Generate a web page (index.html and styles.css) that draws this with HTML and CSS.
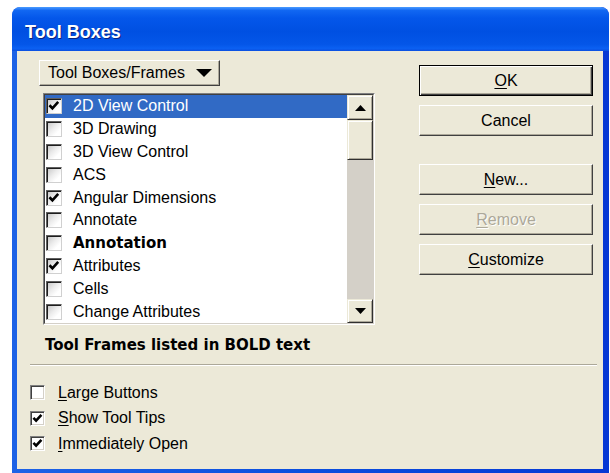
FILE: index.html
```html
<!DOCTYPE html>
<html lang="en">
<head>
<meta charset="utf-8">
<title>Tool Boxes</title>
<link rel="stylesheet" href="styles.css">
</head>
<body>
<div class="window">
  <div class="titlebar"><span class="title">Tool Boxes</span></div>
  <div class="client">
    <div class="top">
      <div class="left">
        <button class="btn dropdown" type="button">
          <span>Tool Boxes/Frames</span>
          <svg class="caret" width="16" height="8" viewBox="0 0 16 8"><path d="M0 0H16L8 8Z" fill="#000"/></svg>
        </button>
        <div class="listbox">
          <div class="frame">
            <ul class="items">
              <li class="item selected"><span class="cb"><svg viewBox="0 0 16 16"><path d="M2.8 7.2L6.2 10.6L12.8 3.4" class="tick"/></svg></span>2D View Control</li>
              <li class="item"><span class="cb"></span>3D Drawing</li>
              <li class="item"><span class="cb"></span>3D View Control</li>
              <li class="item"><span class="cb"></span>ACS</li>
              <li class="item"><span class="cb"><svg viewBox="0 0 16 16"><path d="M2.8 7.2L6.2 10.6L12.8 3.4" class="tick"/></svg></span>Angular Dimensions</li>
              <li class="item"><span class="cb"></span>Annotate</li>
              <li class="item frame-entry"><span class="cb"></span>Annotation</li>
              <li class="item"><span class="cb"><svg viewBox="0 0 16 16"><path d="M2.8 7.2L6.2 10.6L12.8 3.4" class="tick"/></svg></span>Attributes</li>
              <li class="item"><span class="cb"></span>Cells</li>
              <li class="item"><span class="cb"></span>Change Attributes</li>
            </ul>
            <div class="vscroll">
              <div class="sbtn"><svg width="11" height="6" viewBox="0 0 11 6"><path d="M5.5 0L11 6H0Z" fill="#000"/></svg></div>
              <div class="thumb"></div>
              <div class="track"></div>
              <div class="sbtn down"><svg width="11" height="6" viewBox="0 0 11 6"><path d="M0 0H11L5.5 6Z" fill="#000"/></svg></div>
            </div>
          </div>
        </div>
      </div>
      <div class="actions">
        <button class="btn default" type="button"><u>O</u>K</button>
        <button class="btn" type="button">Cancel</button>
        <button class="btn spaced" type="button"><u>N</u>ew...</button>
        <button class="btn disabled" type="button"><u>R</u>emove</button>
        <button class="btn" type="button"><u>C</u>ustomize</button>
      </div>
    </div>
    <p class="note">Tool Frames listed in BOLD text</p>
    <hr class="sep">
    <div class="options">
      <div class="opt"><span class="box"></span><span><u>L</u>arge Buttons</span></div>
      <div class="opt"><span class="box"><svg viewBox="0 0 15 15"><path d="M2.8 6.8L5.9 9.9L12 3.4" class="tick"/></svg></span><span><u>S</u>how Tool Tips</span></div>
      <div class="opt"><span class="box"><svg viewBox="0 0 15 15"><path d="M2.8 6.8L5.9 9.9L12 3.4" class="tick"/></svg></span><span><u>I</u>mmediately Open</span></div>
    </div>
  </div>
</div>
</body>
</html>
```

FILE: styles.css
```css
* { box-sizing: border-box; }

html, body {
  margin: 0;
  background: #fff;
}

body {
  font-family: "Liberation Sans", Arial, sans-serif;
  font-size: 16px;
  color: #000;
}

u {
  text-decoration: underline;
  text-underline-offset: 2px;
}

/* window frame */
.window {
  margin: 7px 0 0 12px;
  width: 597px;
  height: 466px;
  display: flex;
  flex-direction: column;
  background: linear-gradient(to right, #1d62e6 0%, #0a4ede 50%, #0638d4 100%);
  border-radius: 8px 8px 0 0;
  overflow: hidden;
}

.titlebar {
  flex: none;
  height: 44px;
  display: flex;
  align-items: center;
  padding: 6px 0 0 13px;
  background: linear-gradient(to bottom,
    #4a9bff 0%, #1167f2 8%, #0457ea 25%, #0050e2 55%, #0456e8 85%, #0b60f2 94%, #0a4fe0 100%);
  border-radius: 8px 8px 0 0;
}

.title {
  color: #fff;
  font-weight: bold;
  font-size: 18px;
  text-shadow: 1px 1px 0 #0a237f;
}

.client {
  flex: 1;
  margin: 0 6px 4px 5px;
  background: #ece9d8;
}

/* upper area: list on the left, command buttons on the right */
.top {
  display: flex;
  padding-top: 9px;
}

.left {
  padding-left: 22px;
}

.btn {
  font: inherit;
  color: #000;
  background: #ece9d8;
  border: 1px solid;
  border-color: #fff #404040 #404040 #fff;
  box-shadow: inset -1px -1px 0 #aca899;
  padding: 0;
  margin: 0;
}

.dropdown {
  width: 181px;
  height: 26px;
  display: flex;
  align-items: center;
  justify-content: space-between;
  padding: 0 7px 0 8px;
}

.caret { display: block; }

.listbox {
  margin: 7px 0 0 4px;
  width: 332px;
  height: 232px;
  border: 1px solid;
  border-color: #808080 #fff #fff #808080;
}

.frame {
  height: 100%;
  display: flex;
  border: 1px solid;
  border-color: #404040 #d4d0c8 #d4d0c8 #404040;
}

.items {
  flex: 1;
  margin: 0;
  padding: 0;
  list-style: none;
  background: #fff;
}

.item {
  height: 22.8px;
  display: flex;
  align-items: center;
  gap: 11px;
  padding-left: 1px;
  white-space: nowrap;
}

.item.selected {
  background: #316ac5;
  color: #fff;
}

.item.frame-entry {
  font-family: "DejaVu Sans", Tahoma, sans-serif;
  font-weight: bold;
  font-size: 15px;
}

.cb {
  flex: none;
  width: 16px;
  height: 16px;
  border: 1px solid;
  border-color: #5f5f5f #d0d0d0 #d0d0d0 #5f5f5f;
  box-shadow: inset 1px 1px 0 #1e1e1e;
  background: linear-gradient(135deg, #c4c4c4 0%, #ececec 45%, #fff 75%);
}

.cb svg, .box svg {
  display: block;
  width: 100%;
  height: 100%;
}

.tick {
  fill: none;
  stroke: #000;
  stroke-width: 3;
}

.vscroll {
  flex: none;
  width: 26px;
  display: flex;
  flex-direction: column;
  background: #d4d0c8;
}

.sbtn, .thumb {
  flex: none;
  background: #ece9d8;
  border: 1px solid;
  border-color: #ece9d8 #303030 #303030 #ece9d8;
  box-shadow: inset 1px 1px 0 #fff, inset -1px -1px 0 #aca899;
}

.sbtn {
  height: 25px;
  display: flex;
  align-items: center;
  justify-content: center;
}

.sbtn.down { height: 24px; }

.thumb { height: 40px; }

.track { flex: 1; }

.actions {
  margin-left: auto;
  margin-right: 10px;
  padding-top: 5px;
  width: 174px;
  display: flex;
  flex-direction: column;
  gap: 9px;
}

.actions .btn {
  height: 31px;
}

.btn.default {
  border-color: #000;
  box-shadow: inset 1px 1px 0 #fff, inset -1px -1px 0 #404040, inset -2px -2px 0 #aca899;
}

.btn.spaced { margin-top: 19px; }

.btn.disabled {
  color: #aca899;
  text-shadow: 1px 1px 0 #fff;
}

/* legend, divider and options */
.note {
  margin: 11px 0 0 28px;
  font-family: "DejaVu Sans", Tahoma, sans-serif;
  font-weight: bold;
  font-size: 15px;
  line-height: 18px;
}

.sep {
  margin: 10px 6px 0 13px;
  height: 2px;
  border: 0;
  border-top: 1px solid #aca899;
  border-bottom: 1px solid #fff;
}

.options {
  margin: 14px 0 0 13px;
}

.opt {
  height: 25.5px;
  display: flex;
  align-items: center;
  gap: 13px;
}

.box {
  flex: none;
  width: 15px;
  height: 15px;
  background: #fff;
  border: 1px solid;
  border-color: #808080 #fff #fff #808080;
  box-shadow: inset 1px 1px 0 #404040, inset -1px -1px 0 #d4d0c8;
}
```
